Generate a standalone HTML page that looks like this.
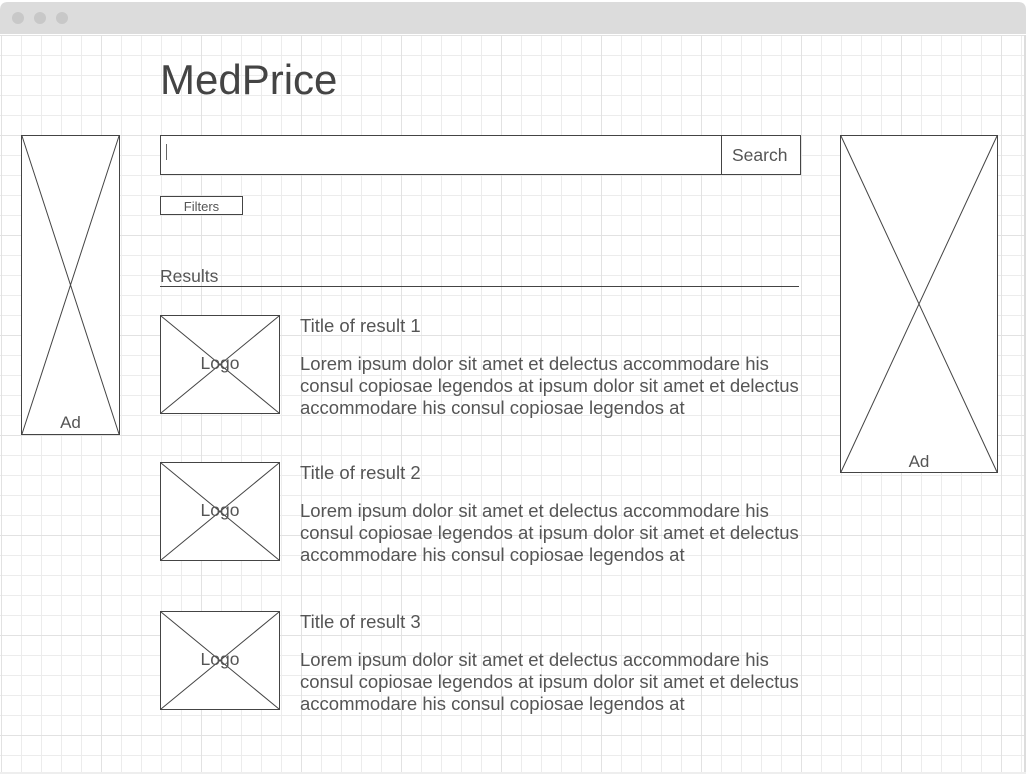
<!DOCTYPE html>
<html><head><meta charset="utf-8">
<style>
html,body{margin:0;padding:0;width:1028px;height:774px;overflow:hidden;background:#fff;font-family:"Liberation Sans",sans-serif;}
.t{position:absolute;color:#555;white-space:nowrap;}
</style></head>
<body>
<svg width="1028" height="774" style="position:absolute;left:0;top:0" xmlns="http://www.w3.org/2000/svg">
<defs>
<pattern id="g" x="1" y="35" width="20" height="20" patternUnits="userSpaceOnUse">
<path d="M0.5 0V20M0 0.5H20" stroke="#ececec" stroke-width="1" fill="none"/>
</pattern>
<pattern id="G" x="1" y="35" width="100" height="100" patternUnits="userSpaceOnUse">
<path d="M0.5 0V100M0 0.5H100" stroke="#e2e2e2" stroke-width="1" fill="none"/>
</pattern>
</defs>
<rect x="0" y="35" width="1024" height="738" fill="url(#g)"/>
<rect x="0" y="35" width="1024" height="738" fill="url(#G)"/>
<rect x="1024" y="35" width="2" height="739" fill="#ddd"/>
<rect x="0" y="772" width="1026" height="2" fill="#eee"/>
<path d="M0 34V10Q0 2 8 2H1018Q1026 2 1026 10V34Z" fill="#dcdcdc"/>
<circle cx="18" cy="18" r="6" fill="#c8c8c8"/>
<circle cx="40" cy="18" r="6" fill="#c8c8c8"/>
<circle cx="62" cy="18" r="6" fill="#c8c8c8"/>
<g stroke="#444" stroke-width="1" fill="#fff">
<rect x="21.5" y="135.5" width="98" height="299"/>
<path d="M22 136L119 434M119 136L22 434" fill="none"/>
<rect x="840.5" y="135.5" width="157" height="337"/>
<path d="M841 136L997 472M997 136L841 472" fill="none"/>
<rect x="160.5" y="135.5" width="640" height="39"/>
<path d="M721.5 136V175" fill="none"/>
<rect x="160.5" y="196.5" width="82" height="18"/>
<path d="M160 286.5H799" fill="none"/>
<rect x="160.5" y="315.5" width="119" height="98"/>
<path d="M161 316L279 413M279 316L161 413" fill="none"/>
<rect x="160.5" y="462.5" width="119" height="98"/>
<path d="M161 463L279 560M279 463L161 560" fill="none"/>
<rect x="160.5" y="611.5" width="119" height="98"/>
<path d="M161 612L279 709M279 612L161 709" fill="none"/>
</g>
<path d="M166.5 144V160" stroke="#666" stroke-width="1"/>
</svg>
<div class="t" style="left:160px;top:56px;font-size:42px;color:#444">MedPrice</div>
<div class="t" style="left:732px;top:145px;font-size:17.5px">Search</div>
<div class="t" style="left:160px;top:199px;width:83px;text-align:center;font-size:13px">Filters</div>
<div class="t" style="left:160px;top:266px;font-size:17.5px">Results</div>
<div class="t" style="left:21px;top:413px;width:99px;text-align:center;font-size:17px">Ad</div>
<div class="t" style="left:840px;top:452px;width:158px;text-align:center;font-size:17px">Ad</div>

<div class="t" style="left:160px;top:353px;width:120px;text-align:center;font-size:17.5px">Logo</div>
<div class="t" style="left:300px;top:315px;font-size:18.5px">Title of result 1</div>
<div class="t" style="left:300px;top:353px;font-size:18.5px;line-height:22px">Lorem ipsum dolor sit amet et delectus accommodare his<br>consul copiosae legendos at ipsum dolor sit amet et delectus<br>accommodare his consul copiosae legendos at</div>

<div class="t" style="left:160px;top:500px;width:120px;text-align:center;font-size:17.5px">Logo</div>
<div class="t" style="left:300px;top:462px;font-size:18.5px">Title of result 2</div>
<div class="t" style="left:300px;top:500px;font-size:18.5px;line-height:22px">Lorem ipsum dolor sit amet et delectus accommodare his<br>consul copiosae legendos at ipsum dolor sit amet et delectus<br>accommodare his consul copiosae legendos at</div>

<div class="t" style="left:160px;top:649px;width:120px;text-align:center;font-size:17.5px">Logo</div>
<div class="t" style="left:300px;top:611px;font-size:18.5px">Title of result 3</div>
<div class="t" style="left:300px;top:649px;font-size:18.5px;line-height:22px">Lorem ipsum dolor sit amet et delectus accommodare his<br>consul copiosae legendos at ipsum dolor sit amet et delectus<br>accommodare his consul copiosae legendos at</div>
</body></html>
